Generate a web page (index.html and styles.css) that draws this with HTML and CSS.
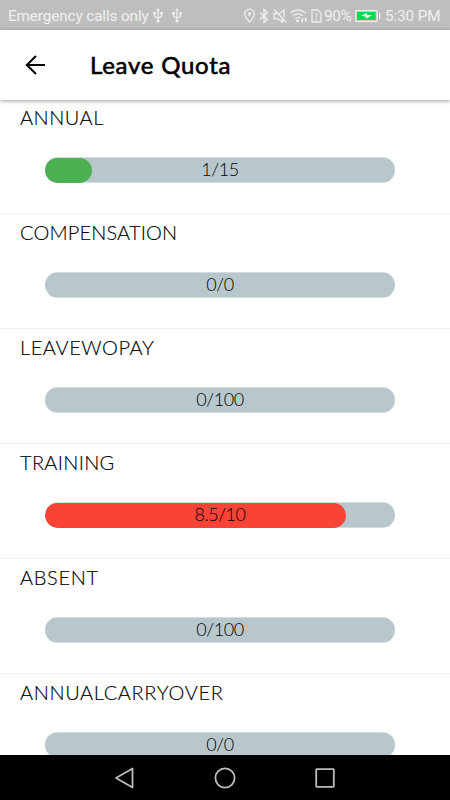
FILE: index.html
```html
<!DOCTYPE html>
<html lang="en">
<head>
<meta charset="utf-8">
<meta name="viewport" content="width=device-width">
<title>Leave Quota</title>
<link rel="stylesheet" href="styles.css">
</head>
<body>
<div class="screen">
  <header class="status">
    <span class="carrier">Emergency calls only</span>
    <svg class="usb" width="10" height="15" viewBox="0 0 10 15"><path d="M5 2v11M1.500 5v3.300L5 10.300l3.500-2V5"/><path class="solid" d="M5 0l2 3H3zM.2 4h2.600v2.600H.2zM7.200 4h2.600v2.600H7.200z"/><circle class="solid" cx="5" cy="13" r="1.600"/></svg>
    <svg class="usb second" width="10" height="15" viewBox="0 0 10 15"><path d="M5 2v11M1.500 5v3.300L5 10.300l3.500-2V5"/><path class="solid" d="M5 0l2 3H3zM.2 4h2.600v2.600H.2zM7.200 4h2.600v2.600H7.200z"/><circle class="solid" cx="5" cy="13" r="1.600"/></svg>
    <svg class="indicators" width="80" height="16" viewBox="0 0 80 16">
      <path d="M6.500 14.200C4 11 1.700 8.500 1.700 6a4.800 4.800 0 0 1 9.600 0c0 2.500-2.300 5-4.800 8.200z"/><circle class="solid" cx="6.500" cy="6" r="1.700"/>
      <path d="M17 4.500l7.500 7L21 14.300V1.500l3.500 3-7.500 7"/>
      <path d="M31 1.500l12 12.500M41 9V2l-5 4M34 5.500h-3v5h3l5.500 3.500v-3.200"/>
      <path d="M47.500 5q7.500-6 15 0M49.800 8q5.200-4.200 10.400 0M52 10.700q3-2.300 5.500-.7"/><circle class="solid" cx="54.500" cy="12.700" r="1.500"/><path d="M59.500 10v4M58.200 12.700l1.300 1.300M62.500 14v-4M63.800 11.300L62.500 10"/>
      <path d="M69 2h5.500l3.500 3v9h-9zM73.500 5v4.500M73.500 11v1.500"/>
    </svg>
    <span class="percent">90%</span>
    <svg class="battery" width="26" height="12" viewBox="0 0 26 12"><rect x=".6" y=".6" width="21.500" height="10.800" rx="1"/><rect class="charge" x="2" y="2" width="18.600" height="8"/><path class="solid" d="M6 5.500l6-2.500v2h5l-6 4V7z"/><path d="M24.700 3v6"/></svg>
    <span class="clock">5:30 PM</span>
  </header>
  <div class="appbar">
    <svg class="back" width="22" height="20" viewBox="0 0 22 20"><path d="M21 10H2.500M12 1L2.800 10l9.200 9"/></svg>
    <h1>Leave Quota</h1>
  </div>
  <main class="list">
    <section class="quota"><h2 class="annual">ANNUAL</h2><div class="bar"><div class="fill green" style="width:47px"></div><span>1/15</span></div></section>
    <section class="quota"><h2 class="compensation">COMPENSATION</h2><div class="bar"><span>0/0</span></div></section>
    <section class="quota"><h2 class="leavewopay">LEAVEWOPAY</h2><div class="bar"><span>0/100</span></div></section>
    <section class="quota"><h2 class="training">TRAINING</h2><div class="bar"><div class="fill red" style="width:301px"></div><span>8.5/10</span></div></section>
    <section class="quota"><h2 class="absent">ABSENT</h2><div class="bar"><span>0/100</span></div></section>
    <section class="quota"><h2 class="carryover">ANNUALCARRYOVER</h2><div class="bar"><span>0/0</span></div></section>
  </main>
  <nav class="navbar">
    <svg width="22" height="22" viewBox="0 0 22 22"><path d="M18.500 1.500v19L2 11z"/></svg>
    <svg width="22" height="22" viewBox="0 0 22 22"><circle cx="11" cy="11" r="9.600"/></svg>
    <svg width="22" height="22" viewBox="0 0 22 22"><rect x="2.200" y="2.200" width="17.600" height="17.600" rx=".5"/></svg>
  </nav>
</div>
</body>
</html>
```
FILE: styles.css
```css
* { box-sizing: border-box; }
body { margin: 0; background: #fff; }
.screen { width: 450px; height: 800px; display: flex; flex-direction: column; overflow: hidden; }
svg { fill: none; flex: none; }
.status { height: 30px; flex: none; background: #bebebe; color: #f0f0f0; font: 15.3px/30px Roboto, sans-serif; display: flex; align-items: center; padding: 1px 0 0 8px; white-space: nowrap; }
.status svg { stroke: #eee; stroke-width: 1.3; }
.status .solid { fill: #eee; stroke: none; }
.status .charge { fill: #00dc50; stroke: none; }
.carrier { width: 145px; letter-spacing: -.12px; }
.second { margin-left: 9px; }
.indicators { margin-left: 61px; }
.percent { width: 31px; margin-left: 1px; letter-spacing: -.4px; }
.battery { margin-right: 4px; }
.clock { letter-spacing: -.1px; }
.appbar { height: 70px; flex: none; display: flex; align-items: center; padding-left: 24px; background: #fff; box-shadow: 0 1px 4px rgba(0, 0, 0, .4); position: relative; }
.back { stroke: #000; stroke-width: 2; }
h1 { margin: 0 0 0 44px; font: 400 24px/30px Lato, sans-serif; letter-spacing: .75px; -webkit-text-stroke: .6px #000; color: #000; }
.list { flex: 1; min-height: 0; overflow: hidden; font-family: Lato, sans-serif; font-weight: 300; color: #000; }
.quota { height: 115px; padding: 5px 0 0 20px; border-bottom: 1px solid #eee; }
.quota:first-child { height: 114px; padding-top: 4px; }
h2 { margin: 0; font-size: 20px; line-height: 26px; font-weight: 300; -webkit-text-stroke: .15px #000; }
.annual { letter-spacing: .5px; }
.compensation { letter-spacing: .15px; }
.leavewopay { letter-spacing: .55px; }
.training { letter-spacing: .3px; }
.absent { letter-spacing: .65px; }
.carryover { letter-spacing: .63px; }
.bar { width: 350px; height: 26px; margin: 27px 0 0 25px; border-radius: 13px; background: linear-gradient(#d3dcdf 1px, #b8c7cc 1px, #b8c7cc 25px, #d3dcdf 25px); display: grid; align-items: center; overflow: hidden; }
.bar > * { grid-area: 1 / 1; }
.bar span { text-align: center; font-size: 18px; line-height: 24px; height: 26px; letter-spacing: -.45px; }
.fill { height: 25px; border-radius: 13px; }
.bar span { z-index: 1; }
.green { background: #4caf50; }
.red { background: #f94336; }
.navbar { height: 45px; flex: none; background: #000; display: flex; justify-content: center; align-items: center; gap: 78px; }
.navbar svg { stroke: #bdbdbd; stroke-width: 1.8; stroke-linejoin: round; }
```
